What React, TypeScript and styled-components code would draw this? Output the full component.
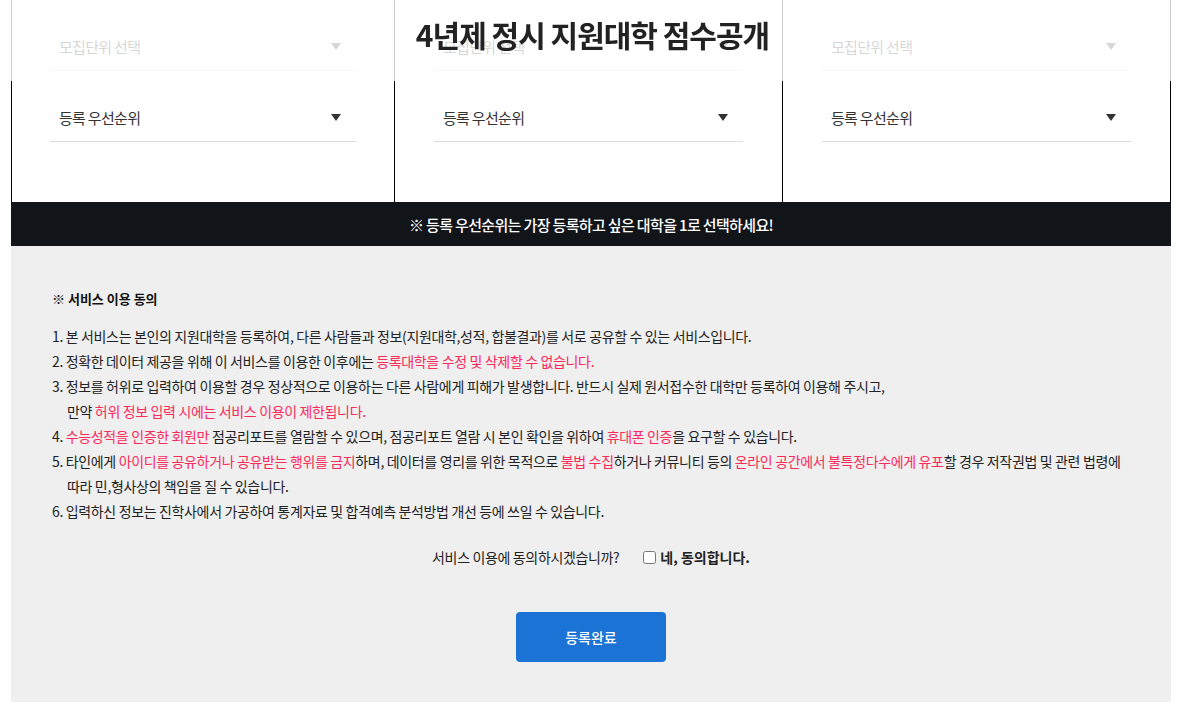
import React from "react";
import styled, { createGlobalStyle } from "styled-components";

const GlobalStyle = createGlobalStyle`
  html, body {
    margin: 0;
    padding: 0;
    background: #fff;
  }
  body {
    font-family: "Noto Sans CJK KR", "Noto Sans", sans-serif;
    color: #222;
  }
  * { box-sizing: border-box; }
`;

const Header = styled.header`
  position: fixed;
  top: 0;
  left: 0;
  right: 0;
  height: 81px;
  background: rgba(255, 255, 255, 0.8);
  display: flex;
  align-items: center;
  justify-content: center;
  z-index: 10;
`;

const Title = styled.h1`
  margin: 0 0 13px;
  font-size: 30px;
  font-weight: 700;
  letter-spacing: -1px;
  color: #222;
`;

const Container = styled.main`
  width: 1160px;
  margin-left: 11px;
`;

const Columns = styled.div`
  display: grid;
  grid-template-columns: 383px 388px 388px;
  border-left: 1px solid #000;
`;

const Column = styled.section<{ $pad: number }>`
  border-right: 1px solid #000;
  padding: 0 ${(p) => p.$pad}px 60px;
  background: #fff;
`;

const SelectRow = styled.div`
  margin-top: 24px;
  height: 47px;
  border-bottom: 1px solid #ddd;
  display: flex;
  align-items: center;
  justify-content: space-between;
  padding: 0 15px 2px 9px;
  font-size: 15px;
  letter-spacing: -0.7px;
  color: #333;
`;

const Arrow = styled.span`
  width: 0;
  height: 0;
  border-left: 5px solid transparent;
  border-right: 5px solid transparent;
  border-top: 7px solid #333;
`;

const Notice = styled.div`
  height: 44px;
  background: #111418;
  color: #fff;
  display: flex;
  align-items: center;
  justify-content: center;
  font-size: 15px;
  font-weight: 500;
  letter-spacing: -0.65px;
`;

const Agreement = styled.section`
  background: #efefef;
  padding: 40px 41px 40px;
`;

const AgreeTitle = styled.h2`
  margin: 0;
  font-size: 13px;
  font-weight: 700;
  line-height: 25px;
  letter-spacing: 0;
  color: #111;
`;

const List = styled.ol`
  list-style: none;
  margin: 13px 0 0;
  padding: 0;
`;

const Item = styled.li`
  font-size: 14px;
  line-height: 25px;
  letter-spacing: -0.35px;
  padding-left: 15px;
  text-indent: -15px;
  color: #222;
`;

const Red = styled.span`
  color: #fa2a5a;
`;

const ConsentRow = styled.div`
  margin-top: 21px;
  display: flex;
  align-items: center;
  justify-content: center;
  font-size: 14px;
  line-height: 25px;
  letter-spacing: -0.35px;
`;

const Question = styled.span`
  margin-right: 24px;
  color: #222;
`;

const CheckLabel = styled.label`
  display: flex;
  align-items: center;
  font-weight: 700;
  font-size: 14px;
  letter-spacing: 0;
  color: #222;
`;

const Check = styled.input`
  width: 13px;
  height: 13px;
  margin: 0 4px 0 0;
`;

const ButtonRow = styled.div`
  margin-top: 42px;
  display: flex;
  justify-content: center;
`;

const SubmitButton = styled.button`
  width: 150px;
  height: 50px;
  border: none;
  border-radius: 4px;
  background: #1b74d5;
  color: #fff;
  font-family: inherit;
  font-size: 14px;
  font-weight: 500;
  letter-spacing: 0;
  cursor: pointer;
`;

const columnPads = [38, 39, 39];

export default function App() {
  return (
    <>
      <GlobalStyle />
      <Header>
        <Title>4년제 정시 지원대학 점수공개</Title>
      </Header>
      <Container>
        <Columns>
          {columnPads.map((pad, i) => (
            <Column key={i} $pad={pad}>
              <SelectRow>
                <span>모집단위 선택</span>
                <Arrow />
              </SelectRow>
              <SelectRow>
                <span>등록 우선순위</span>
                <Arrow />
              </SelectRow>
            </Column>
          ))}
        </Columns>
        <Notice>※ 등록 우선순위는 가장 등록하고 싶은 대학을 1로 선택하세요!</Notice>
        <Agreement>
          <AgreeTitle>※ 서비스 이용 동의</AgreeTitle>
          <List>
            <Item>
              1. 본 서비스는 본인의 지원대학을 등록하여, 다른 사람들과 정보(지원대학,성적, 합불결과)를 서로 공유할 수 있는 서비스입니다.
            </Item>
            <Item>
              2. 정확한 데이터 제공을 위해 이 서비스를 이용한 이후에는 <Red>등록대학을 수정 및 삭제할 수 없습니다.</Red>
            </Item>
            <Item>
              3. 정보를 허위로 입력하여 이용할 경우 정상적으로 이용하는 다른 사람에게 피해가 발생합니다. 반드시 실제 원서접수한 대학만 등록하여 이용해 주시고,
              <br />
              만약 <Red>허위 정보 입력 시에는 서비스 이용이 제한됩니다.</Red>
            </Item>
            <Item>
              4. <Red>수능성적을 인증한 회원만</Red> 점공리포트를 열람할 수 있으며, 점공리포트 열람 시 본인 확인을 위하여 <Red>휴대폰 인증</Red>을 요구할 수 있습니다.
            </Item>
            <Item>
              5. 타인에게 <Red>아이디를 공유하거나 공유받는 행위를 금지</Red>하며, 데이터를 영리를 위한 목적으로 <Red>불법 수집</Red>하거나 커뮤니티 등의 <Red>온라인 공간에서 불특정다수에게 유포</Red>할 경우 저작권법 및 관련 법령에
              <br />
              따라 민,형사상의 책임을 질 수 있습니다.
            </Item>
            <Item>
              6. 입력하신 정보는 진학사에서 가공하여 통계자료 및 합격예측 분석방법 개선 등에 쓰일 수 있습니다.
            </Item>
          </List>
          <ConsentRow>
            <Question>서비스 이용에 동의하시겠습니까?</Question>
            <CheckLabel>
              <Check type="checkbox" />
              네, 동의합니다.
            </CheckLabel>
          </ConsentRow>
          <ButtonRow>
            <SubmitButton type="button">등록완료</SubmitButton>
          </ButtonRow>
        </Agreement>
      </Container>
    </>
  );
}
